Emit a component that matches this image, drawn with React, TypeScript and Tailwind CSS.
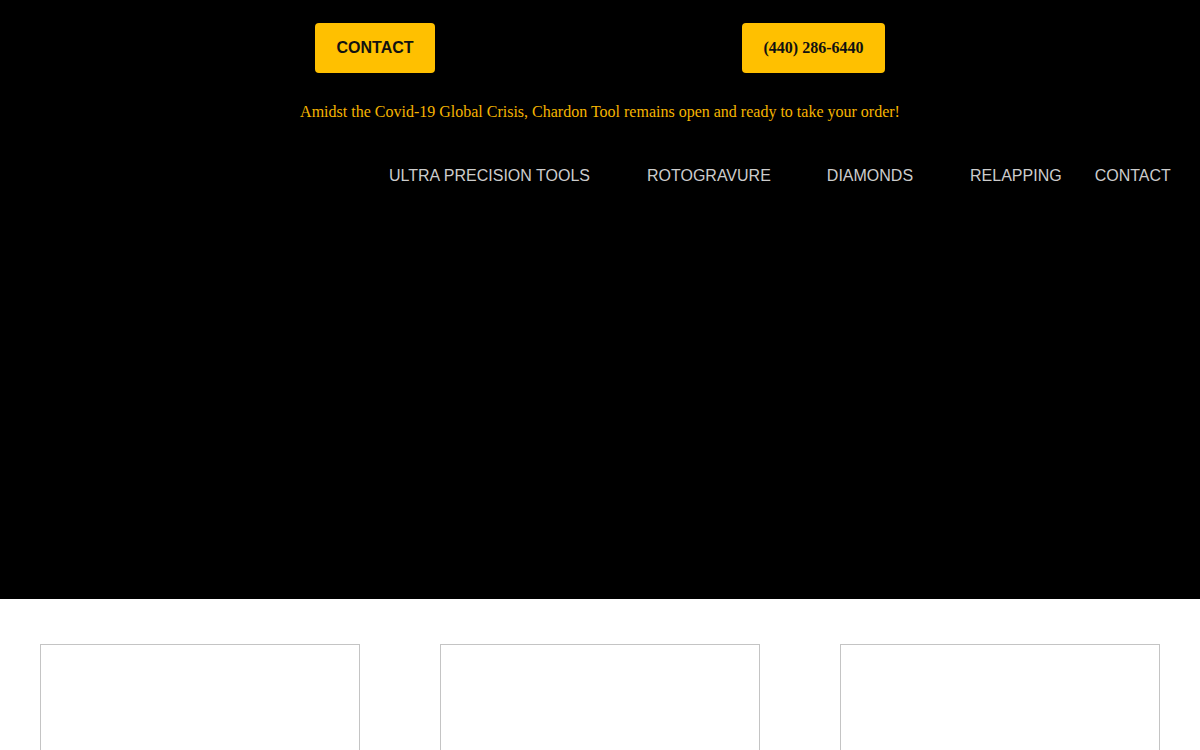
import React from "react";

const navItems = [
  { label: "ULTRA PRECISION TOOLS", gap: "mr-[57px]" },
  { label: "ROTOGRAVURE", gap: "mr-[56px]" },
  { label: "DIAMONDS", gap: "mr-[57px]" },
  { label: "RELAPPING", gap: "mr-[33px]" },
  { label: "CONTACT", gap: "" },
];

const App: React.FC = () => {
  return (
    <div className="min-h-screen bg-white">
      <header className="h-[599px] bg-black">
        <div className="flex items-start pt-[23px]">
          <a
            href="#"
            className="ml-[315px] flex h-[50px] w-[120px] items-center justify-center rounded-[4px] bg-[#ffc000] font-['Liberation_Sans',Arial,sans-serif] text-base font-bold text-[#111]"
          >
            CONTACT
          </a>
          <a
            href="#"
            className="ml-[307px] flex h-[50px] w-[143px] items-center justify-center rounded-[4px] bg-[#ffc000] font-['Liberation_Serif','Times_New_Roman',serif] text-base font-bold text-[#111]"
          >
            (440) 286-6440
          </a>
        </div>

        <p className="mt-[29px] text-center font-['Liberation_Serif','Times_New_Roman',serif] text-base leading-[20px] text-[#f5b400]">
          Amidst the Covid-19 Global Crisis, Chardon Tool remains open and ready to take your order!
        </p>

        <nav className="mt-[44px] flex pl-[389px] font-['Liberation_Sans',Arial,sans-serif] text-base leading-[20px] text-[#cccccc]">
          {navItems.map((item) => (
            <a key={item.label} href="#" className={item.gap}>
              {item.label}
            </a>
          ))}
        </nav>
      </header>

      <section className="grid grid-cols-3 gap-[80px] px-[40px] pt-[45px]">
        <div className="h-[200px] border border-[#c4c4c4]" />
        <div className="h-[200px] border border-[#c4c4c4]" />
        <div className="h-[200px] border border-[#c4c4c4]" />
      </section>
    </div>
  );
};

export default App;
